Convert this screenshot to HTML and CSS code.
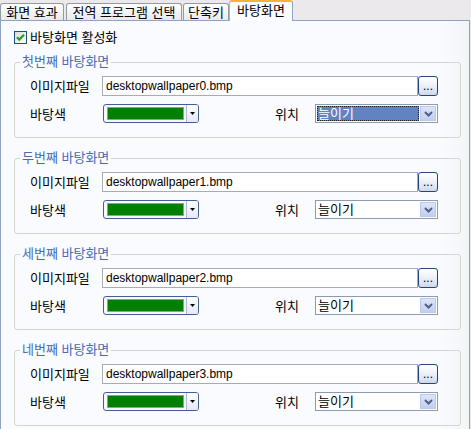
FILE: index.html
```html
<!DOCTYPE html>
<html lang="ko">
<head>
<meta charset="utf-8">
<title>바탕화면</title>
<link rel="stylesheet" href="styles.css">
</head>
<body>
<div class="tabs">
  <div class="tab t1">화면 효과</div>
  <div class="tab t2">전역 프로그램 선택</div>
  <div class="tab t3">단축키</div>
  <div class="tab active">바탕화면</div>
</div>
<div class="panel">
  <label class="check-row">
    <span class="checkbox"><svg width="11" height="11" viewBox="0 0 11 11"><path d="M2 5.2 L4.3 7.6 L9 2.8" fill="none" stroke="#21a121" stroke-width="2.2"/></svg></span>
    <span class="ko">바탕화면 활성화</span>
  </label>

  <fieldset class="group">
    <legend>첫번째 바탕화면</legend>
    <div class="group-body">
      <div class="row">
        <span class="label">이미지파일</span>
        <div class="file-input">desktopwallpaper0.bmp</div>
        <button class="browse">...</button>
      </div>
      <div class="row row2">
        <span class="label">바탕색</span>
        <div class="color-combo"><span class="swatch"></span><span class="combo-btn"><svg width="5" height="3" viewBox="0 0 5 3"><polygon points="0,0 5,0 2.5,3" fill="#000"/></svg></span></div>
        <span class="spacer"></span>
        <span class="label pos">위치</span>
        <div class="select focused"><span class="select-text"><span class="sel">늘이기</span></span><span class="select-btn"><svg width="9" height="6" viewBox="0 0 9 6"><path d="M1 1 L4.5 4.5 L8 1" fill="none" stroke="#4d6185" stroke-width="2"/></svg></span></div>
      </div>
    </div>
  </fieldset>

  <fieldset class="group">
    <legend>두번째 바탕화면</legend>
    <div class="group-body">
      <div class="row">
        <span class="label">이미지파일</span>
        <div class="file-input">desktopwallpaper1.bmp</div>
        <button class="browse">...</button>
      </div>
      <div class="row row2">
        <span class="label">바탕색</span>
        <div class="color-combo"><span class="swatch"></span><span class="combo-btn"><svg width="5" height="3" viewBox="0 0 5 3"><polygon points="0,0 5,0 2.5,3" fill="#000"/></svg></span></div>
        <span class="spacer"></span>
        <span class="label pos">위치</span>
        <div class="select"><span class="select-text"><span class="sel">늘이기</span></span><span class="select-btn"><svg width="9" height="6" viewBox="0 0 9 6"><path d="M1 1 L4.5 4.5 L8 1" fill="none" stroke="#4d6185" stroke-width="2"/></svg></span></div>
      </div>
    </div>
  </fieldset>

  <fieldset class="group">
    <legend>세번째 바탕화면</legend>
    <div class="group-body">
      <div class="row">
        <span class="label">이미지파일</span>
        <div class="file-input">desktopwallpaper2.bmp</div>
        <button class="browse">...</button>
      </div>
      <div class="row row2">
        <span class="label">바탕색</span>
        <div class="color-combo"><span class="swatch"></span><span class="combo-btn"><svg width="5" height="3" viewBox="0 0 5 3"><polygon points="0,0 5,0 2.5,3" fill="#000"/></svg></span></div>
        <span class="spacer"></span>
        <span class="label pos">위치</span>
        <div class="select"><span class="select-text"><span class="sel">늘이기</span></span><span class="select-btn"><svg width="9" height="6" viewBox="0 0 9 6"><path d="M1 1 L4.5 4.5 L8 1" fill="none" stroke="#4d6185" stroke-width="2"/></svg></span></div>
      </div>
    </div>
  </fieldset>

  <fieldset class="group">
    <legend>네번째 바탕화면</legend>
    <div class="group-body">
      <div class="row">
        <span class="label">이미지파일</span>
        <div class="file-input">desktopwallpaper3.bmp</div>
        <button class="browse">...</button>
      </div>
      <div class="row row2">
        <span class="label">바탕색</span>
        <div class="color-combo"><span class="swatch"></span><span class="combo-btn"><svg width="5" height="3" viewBox="0 0 5 3"><polygon points="0,0 5,0 2.5,3" fill="#000"/></svg></span></div>
        <span class="spacer"></span>
        <span class="label pos">위치</span>
        <div class="select"><span class="select-text"><span class="sel">늘이기</span></span><span class="select-btn"><svg width="9" height="6" viewBox="0 0 9 6"><path d="M1 1 L4.5 4.5 L8 1" fill="none" stroke="#4d6185" stroke-width="2"/></svg></span></div>
      </div>
    </div>
  </fieldset>
</div>
</body>
</html>
```
FILE: styles.css
```css
html, body {
  margin: 0;
  padding: 0;
}
body {
  width: 471px;
  height: 429px;
  overflow: hidden;
  background: #ece9ec;
  font-family: "Liberation Sans", "Noto Sans CJK KR", sans-serif;
  font-size: 12px;
  line-height: 14px;
  color: #000;
}

/* Korean captions render slightly larger, like the bitmap UI font */
.tab,
.ko,
.label,
.group legend,
.sel {
  font-size: 13px;
  line-height: 14px;
}

/* tabs */
.tabs {
  display: flex;
  align-items: flex-end;
  height: 20px;
}
.tab {
  box-sizing: border-box;
  height: 17px;
  border: 1px solid #919b9c;
  border-bottom: none;
  border-radius: 3px 3px 0 0;
  background: linear-gradient(#ffffff, #f3f3f6 55%, #e9e9ee);
  display: flex;
  justify-content: center;
  align-items: flex-start;
  padding-top: 2px;
  white-space: nowrap;
}
.t1 { width: 64px; }
.t2 { width: 116px; margin-left: 2px; }
.t3 { width: 46px; margin-left: 1px; }
.tab.active {
  width: 64px;
  height: 21px;
  margin-bottom: -1px;
  position: relative;
  z-index: 1;
  background: #fbfcff;
  border-top: 2px solid #f7b23c;
  border-left-color: #a9b6c9;
  border-right-color: #8ea3c0;
  padding-top: 2px;
}

/* panel */
.panel {
  box-sizing: border-box;
  width: 470px;
  height: 420px;
  border: 1px solid #8ea3c0;
  background: linear-gradient(to right, #fafbff 0, #fafbff 94%, #f3f4f7 100%);
  padding: 10px 8px 0 13px;
}

.check-row {
  display: flex;
  align-items: center;
  gap: 3px;
  height: 13px;
}
.checkbox {
  box-sizing: border-box;
  width: 13px;
  height: 13px;
  border: 1px solid #1c5180;
  background: linear-gradient(135deg, #dcdcd7, #ffffff);
  display: flex;
}

/* group boxes */
.group {
  margin: 11px 0 0 0;
  padding: 0;
  border: 1px solid #d3d3cf;
  border-radius: 3px;
  min-width: 0;
}
.group + .group {
  margin-top: 13px;
}
.group legend {
  margin-left: 5px;
  padding: 0 2px;
  color: #4a6ab3;
}
.group-body {
  padding: 7px 22px 14px 15px;
}

.row {
  display: flex;
  align-items: center;
  height: 20px;
}
.row2 {
  margin-top: 8px;
  height: 19px;
}
.label {
  width: 72px;
  flex: none;
  padding-top: 2px;
}
.spacer { flex: 1; }
.pos { width: 40px; }

.file-input {
  box-sizing: border-box;
  width: 316px;
  height: 20px;
  border: 1px solid #a5acb5;
  background: #fff;
  padding: 0 3px;
  line-height: 18px;
  white-space: nowrap;
}
.browse {
  box-sizing: border-box;
  width: 20px;
  height: 20px;
  margin: 0;
  padding: 0 0 2px 0;
  border: 1px solid #23467f;
  border-radius: 3px;
  background: linear-gradient(#ffffff, #eef1f8 45%, #cfd9ec);
  font-family: "Liberation Sans", sans-serif;
  font-size: 12px;
  line-height: 14px;
  color: #000;
  display: flex;
  align-items: flex-end;
  justify-content: center;
}

/* colour combo */
.color-combo {
  box-sizing: border-box;
  margin-left: 1px;
  width: 96px;
  height: 19px;
  border: 1px solid #445f91;
  border-radius: 3px;
  background: #f7f8fc;
  display: flex;
  align-items: stretch;
  padding: 2px 0 0 3px;
}
.swatch {
  box-sizing: border-box;
  width: 77px;
  height: 13px;
  background: #008000;
  border: 1px solid #9b9b9b;
}
.combo-btn {
  box-sizing: border-box;
  width: 12px;
  height: 17px;
  margin: -2px 0 0 auto;
  border-left: 1px solid #aab6cd;
  background: linear-gradient(#ffffff, #e4e9f4);
  border-radius: 0 2px 2px 0;
  display: flex;
  align-items: center;
  justify-content: center;
}

/* position select */
.select {
  box-sizing: border-box;
  width: 123px;
  height: 19px;
  border: 1px solid #8d9bb0;
  background: #fff;
  display: flex;
  padding: 1px;
}
.select-text {
  flex: 1;
  display: flex;
  align-items: center;
  padding-left: 1px;
  margin-right: 1px;
}
.focused .select-text {
  background: #6283c2;
  color: #fff;
  outline: 1px dotted #1a1a1a;
  outline-offset: -1px;
}
.select-btn {
  box-sizing: border-box;
  width: 16px;
  border: 1px solid #b9c8e6;
  background: linear-gradient(#dbe4f7, #c2d0ee);
  display: flex;
  align-items: center;
  justify-content: center;
}
```
